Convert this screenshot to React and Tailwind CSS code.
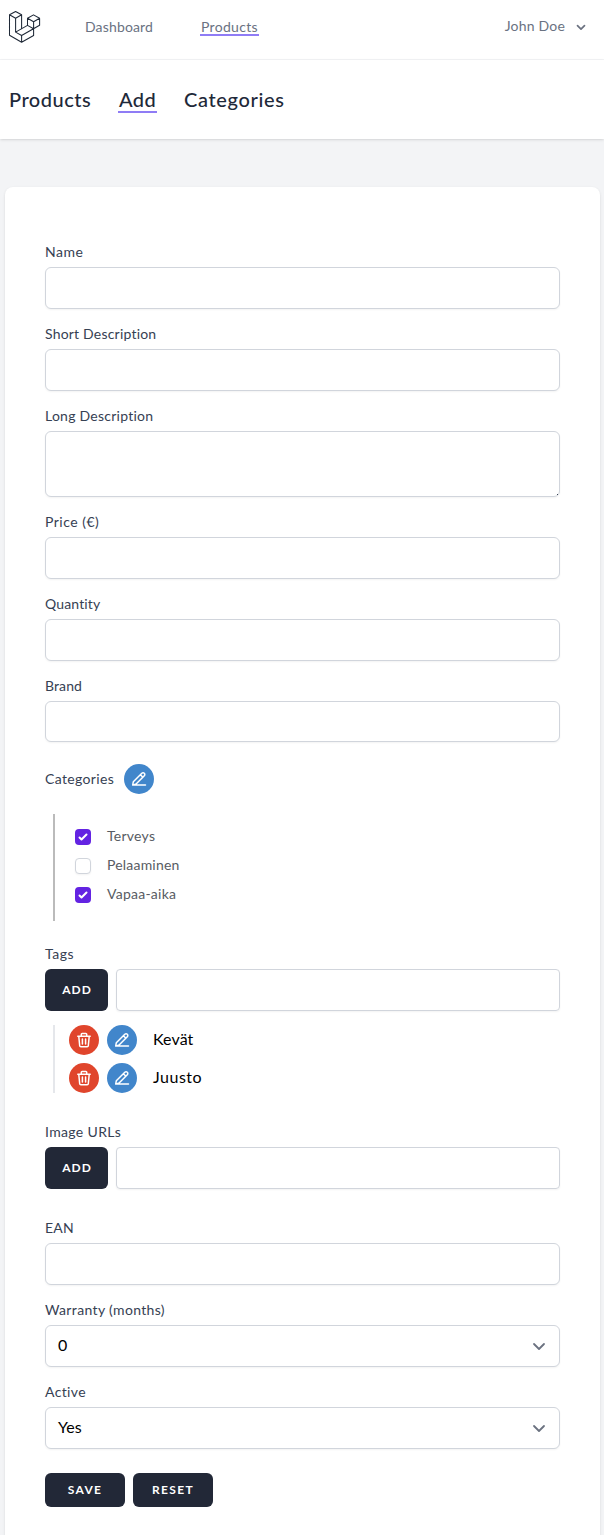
import React from "react";

function Logo() {
  return (
    <svg className="h-11 w-11 shrink-0" viewBox="0 0 44 44" fill="none" stroke="#1f2937" strokeWidth="1.05" strokeLinejoin="round" strokeLinecap="round">
      <path d="M9.5 14.8 15.6 11.5 21.6 14.8 15.6 18.2ZM9.5 14.8V35.3L21.6 42.3 33.6 35.5V28.8M15.6 18.2V32.1L21.6 35.5V42.3M21.6 14.8V28.8M15.6 32.1 27.5 25.4M21.6 35.5 39.6 25.2V18.2L33.5 14.9 27.5 18.2 33.6 21.7 39.6 18.2M27.5 18.2V25.4L33.6 28.8V21.7" />
    </svg>
  );
}

function Chevron({ className }) {
  return (
    <svg className={className} viewBox="0 0 20 20" fill="none" stroke="#6b7280" strokeLinecap="round" strokeLinejoin="round">
      <path d="m5 8 5 5 5-5" />
    </svg>
  );
}

function EditButton() {
  return (
    <button type="button" aria-label="Edit" className="h-[30px] w-[30px] shrink-0 rounded-full bg-[#4186cb]">
      <svg viewBox="0 0 30 30" fill="none" stroke="white" strokeWidth="1.5" strokeLinecap="round" strokeLinejoin="round">
        <path d="M21.5 21.1H8.7L9.3 17.8 17.8 9.3a1.75 1.75 0 0 1 2.5 2.5L12.1 20 8.7 21.1M16.4 10.7l2.5 2.5" />
      </svg>
    </button>
  );
}

function DeleteButton() {
  return (
    <button type="button" aria-label="Delete" className="h-[30px] w-[30px] shrink-0 rounded-full bg-[#e0452c]">
      <svg viewBox="0 0 30 30" fill="none" stroke="white" strokeWidth="1.5" strokeLinecap="round" strokeLinejoin="round">
        <path d="M8.8 11.3H21.2M12.3 11V9.3a.8.8 0 0 1 .8-.8h3.8a.8.8 0 0 1 .8.8V11M9.8 11.5l.9 9.2a1.2 1.2 0 0 0 1.2 1.1h6.2a1.2 1.2 0 0 0 1.2-1.1l.9-9.2M13.4 14v5M16.6 14v5" />
      </svg>
    </button>
  );
}

const field = "block w-full rounded-md border border-gray-300 bg-white shadow-[0_1px_2px_0_rgba(0,0,0,0.05)]";

function Label({ children, className = "tracking-[0.25px]" }) {
  return (
    <div className="h-5 text-sm leading-[18px] text-gray-700">
      <span className={className}>{children}</span>
    </div>
  );
}

function Field({ label, tracking, children }) {
  return (
    <div>
      <Label className={tracking}>{label}</Label>
      <div className="mt-1">{children || <input type="text" className={field + " h-[42px] px-3"} />}</div>
    </div>
  );
}

function SelectBox({ value }) {
  return (
    <button type="button" className={field + " h-[42px] px-3"}>
      <span className="flex items-center justify-between">
        <span className="-mt-0.5 text-base leading-6 text-black">{value}</span>
        <Chevron className="-mt-px -mr-0.5 h-5 w-5 stroke-[1.8]" />
      </span>
    </button>
  );
}

function AddRow() {
  return (
    <div className="flex gap-2">
      <button type="button" className="h-[42px] w-[63px] rounded-md bg-[#222837] pl-px text-xs font-bold tracking-[1px] text-white">ADD</button>
      <input type="text" className="h-[42px] min-w-0 flex-1 rounded border border-gray-300 px-3 shadow-[0_1px_2px_0_rgba(0,0,0,0.05)]" />
    </div>
  );
}

function CheckItem({ label, checked, tracking }) {
  return (
    <label className="flex h-[29px] items-center">
      <span className={checked ? "flex h-4 w-4 rounded bg-[#6323e2]" : "flex h-4 w-4 rounded border border-gray-300 bg-white shadow-[0_1px_2px_0_rgba(0,0,0,0.05)]"}>
        {checked && (
          <svg viewBox="0 0 16 16" fill="white">
            <path d="M12.207 4.793a1 1 0 010 1.414l-5 5a1 1 0 01-1.414 0l-2-2a1 1 0 011.414-1.414L6.5 9.086l4.293-4.293a1 1 0 011.414 0z" />
          </svg>
        )}
      </span>
      <span className={"-mt-0.5 ml-4 text-sm leading-5 text-[#585c63] " + tracking}>{label}</span>
    </label>
  );
}

function TagItem({ label, tracking }) {
  return (
    <div className="flex items-center gap-2">
      <DeleteButton />
      <EditButton />
      <span className={"-mt-0.5 ml-2 text-base leading-6 text-black " + tracking}>{label}</span>
    </div>
  );
}

export default function App() {
  return (
    <div className="h-[1535px] overflow-hidden bg-gray-100 font-['Lato','Noto_Sans',sans-serif] text-gray-900">
      <nav className="flex h-[60px] items-start border-b border-gray-100 bg-white text-sm leading-5 text-gray-500">
        <Logo />
        <a className="ml-[41px] mt-[17px] w-[69px] tracking-[0.15px]">Dashboard</a>
        <a className="ml-[46px] mt-[17px] h-[19px] w-[59px] border-b-2 border-[#8f7cf5] pl-px tracking-[0.3px]">Products</a>
        <div className="ml-auto mr-4 mt-4 flex items-center">
          <span className="tracking-[0.2px]">John Doe</span>
          <Chevron className="ml-[9px] mt-px h-[14px] w-[14px] stroke-[2.4]" />
        </div>
      </nav>
      <header className="flex h-[79px] bg-white pl-[9px] pt-[26px] text-xl font-medium leading-[26px] text-gray-800 shadow">
        <a className="w-[109px] tracking-[0.5px]">Products</a>
        <a className="h-[27px] w-[39px] border-b-2 border-[#8f7cf5] pl-px tracking-[0.4px]">Add</a>
        <a className="ml-[27px] tracking-[0.65px]">Categories</a>
      </header>
      <main className="ml-[5px] mr-1 mt-12 h-[1400px] rounded-lg bg-white px-10 pt-14 shadow-sm">
        <form className="flex flex-col">
          <div className="flex flex-col gap-4">
            <Field label="Name" tracking="tracking-[0.55px]" />
            <Field label="Short Description" tracking="tracking-[0.2px]" />
            <Field label="Long Description">
              <div className="relative">
                <textarea className={field + " h-[66px] resize-none px-3 py-2"} />
                <span className="absolute bottom-[2px] right-[2px] h-px w-px bg-gray-700" />
              </div>
            </Field>
            <Field label="Price (€)" tracking="tracking-[0.5px]" />
            <Field label="Quantity" tracking="tracking-[0.15px]" />
            <Field label="Brand" tracking="tracking-[0.1px]">
              <input type="text" className={field + " h-[41px] px-3"} />
            </Field>
          </div>
          <div className="mt-[22px] flex h-[30px] items-center">
            <div className="w-[79px]"><Label className="relative top-px tracking-[0.35px]">Categories</Label></div>
            <EditButton />
          </div>
          <div className="ml-2 mt-5 h-[107px] border-l-2 border-[#bbbbbb] pl-5 pt-2">
            <CheckItem label="Terveys" checked tracking="tracking-[0.25px]" />
            <CheckItem label="Pelaaminen" tracking="tracking-[0.2px]" />
            <CheckItem label="Vapaa-aika" checked tracking="tracking-[0.25px]" />
          </div>
          <div className="mt-6">
            <Field label="Tags" tracking="tracking-[0.5px]"><AddRow /></Field>
          </div>
          <div className="ml-2 mt-[14px] flex flex-col gap-2 border-l-2 border-gray-200 pl-[14px]">
            <TagItem label="Kevät" tracking="tracking-[0.1px]" />
            <TagItem label="Juusto" tracking="tracking-[0.5px]" />
          </div>
          <div className="mt-[30px]">
            <Field label="Image URLs" tracking="tracking-[0.35px]"><AddRow /></Field>
          </div>
          <div className="mt-[30px] flex flex-col gap-4">
            <Field label="EAN" />
            <Field label="Warranty (months)" tracking="tracking-[0.35px]"><SelectBox value="0" /></Field>
            <Field label="Active" tracking="tracking-[0.35px]"><SelectBox value="Yes" /></Field>
          </div>
          <div className="mt-6 flex gap-2 text-xs font-bold text-white">
            <button type="button" className="h-[34px] w-20 rounded-md bg-[#222837] tracking-[1.3px]">SAVE</button>
            <button type="button" className="h-[34px] w-20 rounded-md bg-[#222837] tracking-[1.3px]">RESET</button>
          </div>
        </form>
      </main>
    </div>
  );
}
